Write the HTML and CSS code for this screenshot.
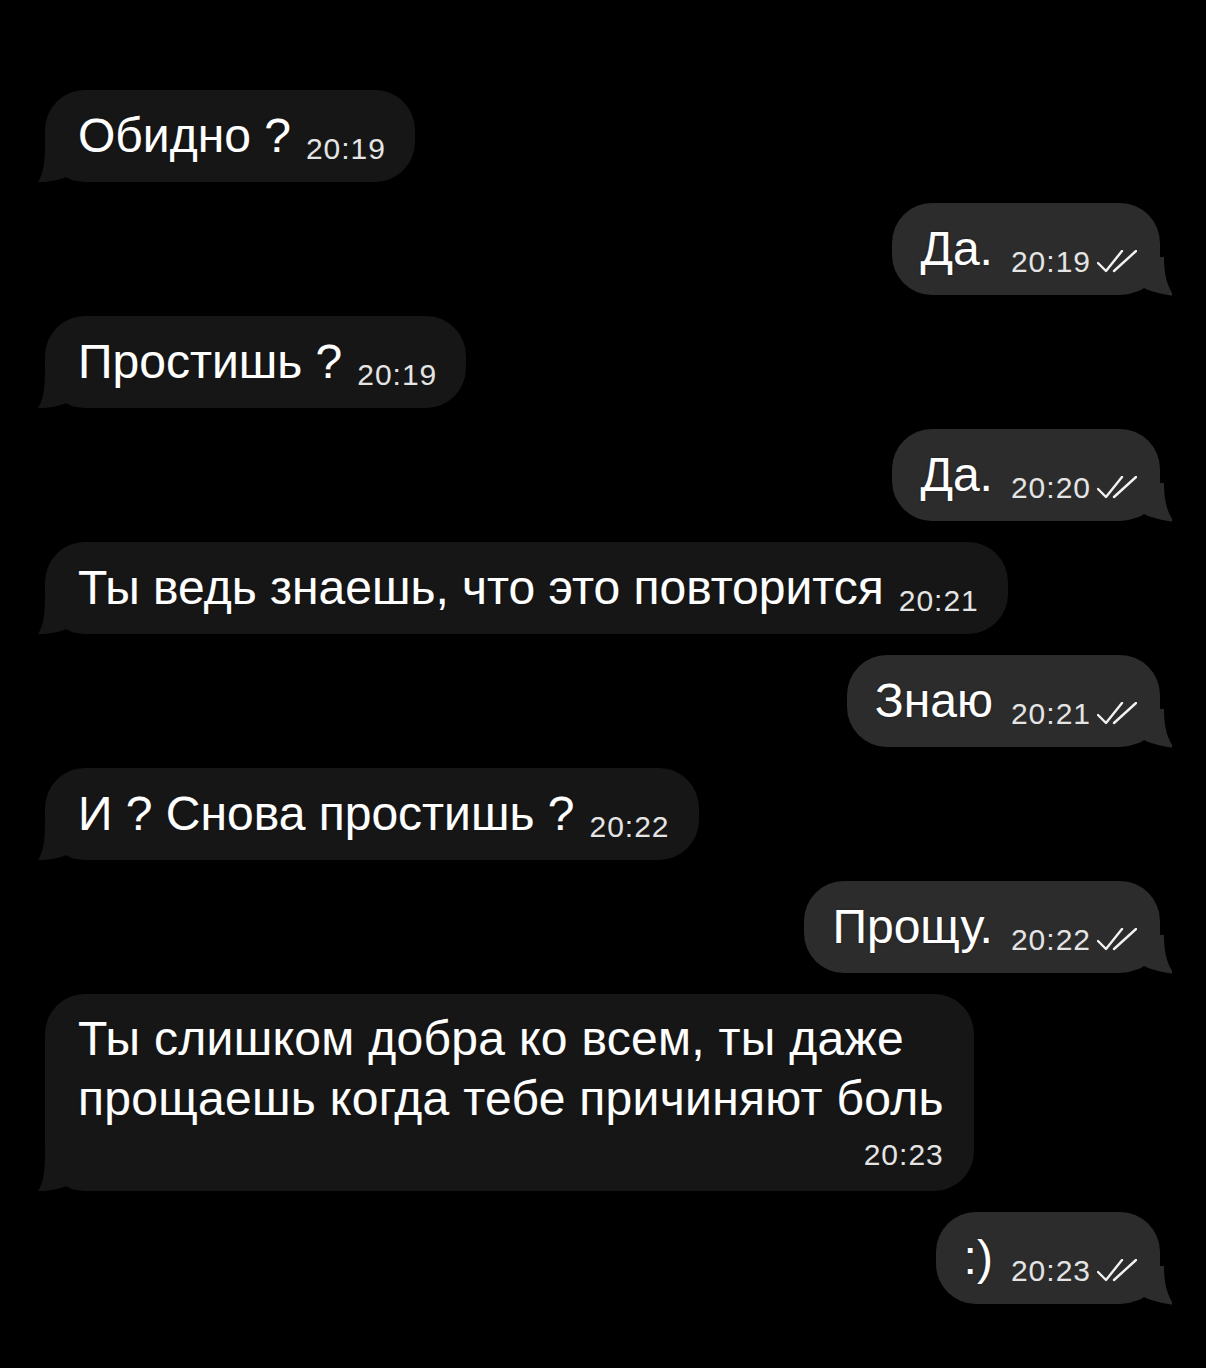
FILE: index.html
```html
<!DOCTYPE html>
<html lang="ru">
<head>
<meta charset="utf-8">
<title>Чат</title>
<link rel="stylesheet" href="styles.css">
</head>
<body>
<div class="chat">
  <div class="msg in"><span class="text">Обидно ?</span><span class="meta"><span class="time">20:19</span></span></div>
  <div class="msg out"><span class="text">Да.</span><span class="meta"><span class="time">20:19</span><svg class="ticks" viewBox="0 0 40 24"><path d="M1 13 L9 21 L25 1"/><path d="M17 21 L39 1"/></svg></span></div>
  <div class="msg in"><span class="text">Простишь ?</span><span class="meta"><span class="time">20:19</span></span></div>
  <div class="msg out"><span class="text">Да.</span><span class="meta"><span class="time">20:20</span><svg class="ticks" viewBox="0 0 40 24"><path d="M1 13 L9 21 L25 1"/><path d="M17 21 L39 1"/></svg></span></div>
  <div class="msg in"><span class="text">Ты ведь знаешь, что это повторится</span><span class="meta"><span class="time">20:21</span></span></div>
  <div class="msg out"><span class="text">Знаю</span><span class="meta"><span class="time">20:21</span><svg class="ticks" viewBox="0 0 40 24"><path d="M1 13 L9 21 L25 1"/><path d="M17 21 L39 1"/></svg></span></div>
  <div class="msg in"><span class="text">И ? Снова простишь ?</span><span class="meta"><span class="time">20:22</span></span></div>
  <div class="msg out"><span class="text">Прощу.</span><span class="meta"><span class="time">20:22</span><svg class="ticks" viewBox="0 0 40 24"><path d="M1 13 L9 21 L25 1"/><path d="M17 21 L39 1"/></svg></span></div>
  <div class="msg in multi"><div class="text">Ты слишком добра ко всем, ты даже<br>прощаешь когда тебе причиняют боль</div><div class="meta-line"><span class="time">20:23</span></div></div>
  <div class="msg out"><span class="text">:)</span><span class="meta"><span class="time">20:23</span><svg class="ticks" viewBox="0 0 40 24"><path d="M1 13 L9 21 L25 1"/><path d="M17 21 L39 1"/></svg></span></div>
</div>
</body>
</html>
```

FILE: styles.css
```css
html, body {
  margin: 0;
  padding: 0;
  background: #000;
}
body {
  width: 1206px;
  height: 1368px;
  overflow: hidden;
  font-family: "Liberation Sans", Arial, sans-serif;
  color: #fff;
}
.chat {
  display: flex;
  flex-direction: column;
  gap: 21px;
  padding: 90px 46px 0 45px;
}
.msg {
  position: relative;
  box-sizing: border-box;
  height: 92px;
  border-radius: 40px;
  padding: 0 29px 0 33px;
  line-height: 92px;
  white-space: nowrap;
  font-size: 48px;
}
.msg .text {
  text-shadow: 0 0 2px rgba(0,0,0,0.9), 0 0 1px rgba(255,255,255,0.4);
}
.in {
  align-self: flex-start;
  background: #161616;
}
.out {
  align-self: flex-end;
  background: #2c2c2c;
  padding: 0 23px 0 28px;
}
.msg::after {
  content: "";
  position: absolute;
  bottom: -2px;
  width: 40px;
  height: 40px;
  background: inherit;
}
.in::after {
  left: -8px;
  clip-path: path("M 8 0 L 40 0 L 40 37 C 36 37 33 35 30 33 C 22 36 12 38 1 38 C 6 30 8 20 8 0 Z");
}
.out::after {
  right: -12px;
  clip-path: path("M 32 0 L 0 0 L 0 35 C 4 35 8 34 12 31 C 20 35 30 37 42 39 C 36 30 32 20 32 0 Z");
}
.meta {
  display: inline-block;
  margin-left: 15px;
  vertical-align: -7px;
  line-height: 1;
}
.out .meta {
  margin-left: 18px;
}
.time {
  font-size: 30px;
  letter-spacing: 1px;
  color: #e4e4e4;
}
.ticks {
  width: 40px;
  height: 24px;
  margin-left: 6px;
  vertical-align: -2px;
  fill: none;
  stroke: #f2f2f2;
  stroke-width: 2.4;
  stroke-linecap: round;
  stroke-linejoin: round;
}
.multi {
  height: 197px;
  line-height: 60px;
  padding: 15px 30px 0 33px;
  white-space: normal;
}
.multi .text {
  letter-spacing: 0.3px;
}
.meta-line {
  text-align: right;
  line-height: 36px;
  margin-top: 2px;
}
```
